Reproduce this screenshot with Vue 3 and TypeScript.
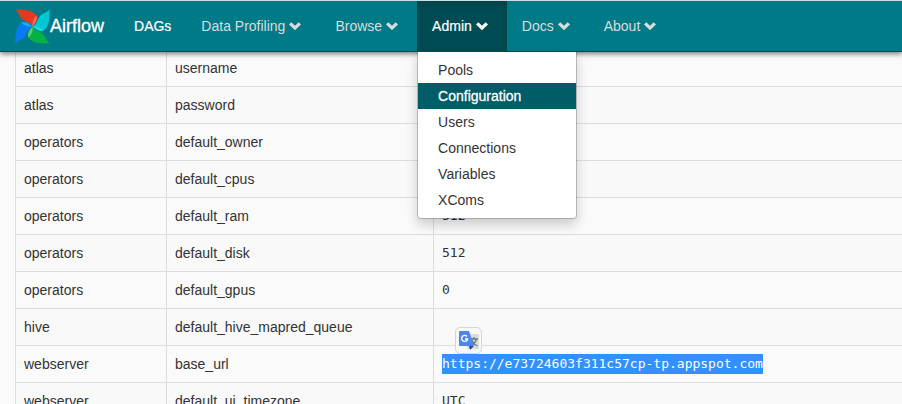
<script setup lang="ts">
interface NavItem { label: string; menu: boolean; bright?: boolean; open?: boolean }
interface ConfigRow { section: string; key: string; value: string; selected?: boolean }
interface Blade { angle: number; fill: string; overlap: string }

const blades: Blade[] = [
  { angle: 0, fill: '#e43921', overlap: '#ff6a4e' },
  { angle: 90, fill: '#00c7d4', overlap: '#10e0e0' },
  { angle: 180, fill: '#04b146', overlap: '#5fd068' },
  { angle: 270, fill: '#087cee', overlap: '#12aef5' },
]

const navItems: NavItem[] = [
  { label: 'DAGs', menu: false, bright: true },
  { label: 'Data Profiling', menu: true },
  { label: 'Browse', menu: true },
  { label: 'Admin', menu: true, bright: true, open: true },
  { label: 'Docs', menu: true },
  { label: 'About', menu: true },
]

const adminLinks: string[] = ['Pools', 'Configuration', 'Users', 'Connections', 'Variables', 'XComs']
const activeLink = 'Configuration'

const rows: ConfigRow[] = [
  { section: 'atlas', key: 'username', value: '' },
  { section: 'atlas', key: 'password', value: '' },
  { section: 'operators', key: 'default_owner', value: '' },
  { section: 'operators', key: 'default_cpus', value: '' },
  { section: 'operators', key: 'default_ram', value: '512' },
  { section: 'operators', key: 'default_disk', value: '512' },
  { section: 'operators', key: 'default_gpus', value: '0' },
  { section: 'hive', key: 'default_hive_mapred_queue', value: '' },
  { section: 'webserver', key: 'base_url', value: 'https://e73724603f311c57cp-tp.appspot.com', selected: true },
  { section: 'webserver', key: 'default_ui_timezone', value: 'UTC' },
]
</script>

<template>
  <div class="page">
    <nav class="navbar">
      <a class="brand" href="#">
        <svg class="logo" viewBox="0 0 35 35" aria-hidden="true">
          <g v-for="blade in blades" :key="blade.angle" :transform="`rotate(${blade.angle} 17.5 17.5)`">
            <path d="M.5.500C9 0 18 1 21.500 6.500c1.500 3.500-1 7.500-4 11C15.500 12 7 13 4.500 6.500 3.500 4 2 2 .5.500Z" :fill="blade.fill" />
            <path d="M21.500 6.500c1.500 3.500-1 7.500-4 11-.5-4 .5-8 4-11Z" :fill="blade.overlap" />
          </g>
        </svg>
        <span>Airflow</span>
      </a>
      <ul class="nav-list">
        <li v-for="item in navItems" :key="item.label" class="nav-item">
          <a v-if="!item.menu" class="nav-link bright" href="#">{{ item.label }}</a>
          <button
            v-else
            type="button"
            class="nav-link has-menu"
            :class="{ bright: item.bright, open: item.open }"
            :aria-expanded="item.open ? 'true' : 'false'"
          >
            {{ item.label }}
            <svg class="chevron" viewBox="0 0 12 8" aria-hidden="true">
              <path d="M0 2.5L2.3.2 6 3.8 9.7.2 12 2.5 6 8.2Z" fill="currentColor" />
            </svg>
          </button>
          <ul v-if="item.open" class="dropdown">
            <li v-for="link in adminLinks" :key="link">
              <a href="#" :class="{ active: link === activeLink }">{{ link }}</a>
            </li>
          </ul>
        </li>
      </ul>
    </nav>

    <main class="content">
      <table class="config">
        <colgroup>
          <col class="col-section" />
          <col class="col-key" />
          <col />
        </colgroup>
        <tbody>
          <tr v-for="(row, i) in rows" :key="i">
            <td>{{ row.section }}</td>
            <td>{{ row.key }}</td>
            <td class="value">
              <span v-if="row.selected" class="selection">{{ row.value }}</span>
              <template v-else>{{ row.value }}</template>
              <button v-if="row.selected" type="button" class="translate" aria-label="Translate">
                <svg viewBox="0 0 20 20" aria-hidden="true">
                  <rect x="8" y="3" width="12" height="15" rx="1" fill="#dcdcdc" />
                  <path d="M11 8h8M15 6v2M17.500 8c-.7 3-2.500 5-5 7M13 9c1 3 3 5 5.500 6" fill="none" stroke="#607d78" stroke-width="1.300" />
                  <path d="M10 15h5l-4 4Z" fill="#3048a8" />
                  <path d="M1 0h9l5 15H1a1 1 0 0 1-1-1V1a1 1 0 0 1 1-1Z" fill="#4c86ec" />
                  <path d="M8 5.500A3 3 0 1 0 8.600 8H6" fill="none" stroke="#fff" stroke-width="1.400" />
                </svg>
              </button>
            </td>
          </tr>
        </tbody>
      </table>
    </main>
  </div>
</template>

<style>
body {
  margin: 0;
  background: #fafafa;
}
</style>

<style scoped>
.page {
  height: 100vh;
  overflow: hidden;
  font: 14px/20px "Liberation Sans", Arial, sans-serif;
  color: #333;
}
ul {
  list-style: none;
  margin: 0;
  padding: 0;
}
.navbar {
  position: relative;
  z-index: 2;
  display: flex;
  padding-left: 15px;
  background: #007a87;
  border-top: 1px solid #cfe0e2;
  border-bottom: 1px solid #004a52;
  box-shadow: 0 2px 5px rgba(0, 0, 0, 0.5);
}
.brand {
  display: flex;
  align-items: center;
  padding-right: 15px;
  color: #fff;
  font-size: 18px;
  text-decoration: none;
  -webkit-text-stroke: 0.3px #fff;
}
.logo {
  width: 35px;
  height: 35px;
}
.nav-list {
  display: flex;
}
.nav-item {
  position: relative;
}
.nav-link {
  display: flex;
  align-items: center;
  gap: 4px;
  height: 50px;
  box-sizing: border-box;
  padding: 0 15px;
  border: 0;
  background: none;
  color: #d7dddd;
  font: inherit;
  text-decoration: none;
}
.has-menu {
  padding-right: 19px;
}
.bright {
  color: #fff;
  -webkit-text-stroke: 0.2px #fff;
}
.open {
  background: #004c54;
  box-shadow: inset 0 3px 8px rgba(0, 0, 0, 0.15);
}
.chevron {
  width: 12px;
  height: 8px;
}
.dropdown {
  position: absolute;
  top: 100%;
  left: 0;
  min-width: 160px;
  box-sizing: border-box;
  margin-top: 1px;
  padding: 5px 0;
  background: #fff;
  border: 1px solid rgba(0, 0, 0, 0.2);
  border-top: 0;
  border-radius: 0 0 4px 4px;
  background-clip: padding-box;
  box-shadow: 0 6px 12px rgba(0, 0, 0, 0.18);
}
.dropdown a {
  display: block;
  padding: 3px 20px;
  color: #333;
  text-decoration: none;
}
.dropdown a.active {
  background: #005c66;
  color: #fff;
  -webkit-text-stroke: 0.3px #fff;
}
.content {
  margin-top: -3px;
  padding-left: 15px;
}
.config {
  width: 100%;
  table-layout: fixed;
  border-collapse: separate;
  border-spacing: 0;
  border-top: 1px solid #ddd;
  border-left: 1px solid #ddd;
}
.col-section {
  width: 151px;
}
.col-key {
  width: 267px;
}
.config td {
  height: 20px;
  padding: 8px;
  border-right: 1px solid #ddd;
  border-bottom: 1px solid #ddd;
}
.config td:last-child {
  border-right: 0;
}
.config tr:nth-child(even) td {
  background: #f9f9f9;
}
.config .value {
  position: relative;
  font-family: "DejaVu Sans Mono", monospace;
  font-size: 13px;
  white-space: nowrap;
}
.selection {
  display: inline-block;
  background: #3390ff;
  color: #fff;
}
.translate {
  position: absolute;
  left: 21px;
  top: -19px;
  display: flex;
  align-items: center;
  justify-content: center;
  width: 27px;
  height: 27px;
  padding: 0;
  background: #f8f8f8;
  border: 1px solid #d5d5d5;
  border-radius: 5px;
}
.translate svg {
  width: 20px;
  height: 20px;
}
</style>
